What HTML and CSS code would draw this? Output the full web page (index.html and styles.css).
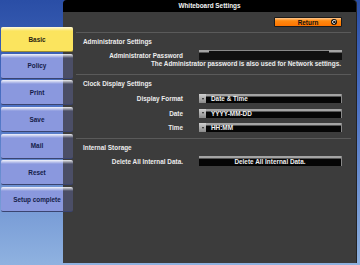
FILE: index.html
```html
<!DOCTYPE html>
<html lang="en">
    <head>
        <meta charset="UTF-8">
        <title>Whiteboard Settings</title>
        <link rel="stylesheet" href="styles.css">
    </head>
    <body>
        <div class="pantalla">
            <nav class="pestanas">
                <button type="button" class="pestana activa">Basic</button>
                <button type="button" class="pestana">Policy</button>
                <button type="button" class="pestana">Print</button>
                <button type="button" class="pestana">Save</button>
                <button type="button" class="pestana">Mail</button>
                <button type="button" class="pestana">Reset</button>
                <button type="button" class="pestana">Setup complete</button>
            </nav>
            <main class="panel">
                <div class="titulo">Whiteboard Settings</div>
                <div class="barra">
                    <button type="button" class="volver">
                        <span>Return</span>
                        <svg class="icono" width="6" height="6" viewBox="0 0 6 6">
                            <circle cx="3" cy="3" r="3" fill="#111"/>
                            <path d="M4.3 2.2A1.5 1.5 0 1 0 4.4 3.6" fill="none" stroke="#fff" stroke-width="0.9"/>
                            <path d="M3.4 1.2L4.9 1.4L4.5 2.8Z" fill="#fff"/>
                        </svg>
                    </button>
                </div>

                <section class="grupo">
                    <h2>Administrator Settings</h2>
                    <div class="fila primera">
                        <label>Administrator Password</label>
                        <div class="campo texto"></div>
                    </div>
                    <p class="nota">The Administrator password is also used for Network settings.</p>
                </section>

                <section class="grupo">
                    <h2>Clock Display Settings</h2>
                    <div class="fila primera">
                        <label>Display Format</label>
                        <div class="campo lista"><span class="flecha"></span><span>Date &amp; Time</span></div>
                    </div>
                    <div class="fila">
                        <label>Date</label>
                        <div class="campo lista"><span class="flecha"></span><span>YYYY-MM-DD</span></div>
                    </div>
                    <div class="fila">
                        <label>Time</label>
                        <div class="campo lista"><span class="flecha"></span><span>HH:MM</span></div>
                    </div>
                </section>

                <section class="grupo ultimo">
                    <h2>Internal Storage</h2>
                    <div class="fila primera">
                        <label>Delete All Internal Data.</label>
                        <button type="button" class="campo boton">Delete All Internal Data.</button>
                    </div>
                </section>
            </main>
        </div>
    </body>
</html>
```

FILE: styles.css
```css
* {
    margin: 0;
    padding: 0;
    box-sizing: border-box;
    font-family: "Liberation Sans", Arial, sans-serif;
}
body {
    width: 360px;
    height: 265px;
    overflow: hidden;
}
.pantalla {
    display: flex;
    height: 265px;
    background: linear-gradient(#2a4ea6, #4d72c4 40%, #8fb2e0);
}
.pestanas {
    width: 63px;
    flex-shrink: 0;
    padding-top: 27px;
    display: flex;
    flex-direction: column;
    gap: 1.7px;
}
.pestana {
    position: relative;
    z-index: 1;
    width: 72px;
    height: 25px;
    margin-left: 1px;
    border: none;
    border-radius: 2px;
    border-bottom: 1px solid #3a4470;
    background:
        linear-gradient(rgba(255,255,255,0.9), rgba(255,255,255,0) 4px),
        linear-gradient(to right, #8a98de 62px, #4b4e66 62px);
    color: #141c48;
    font-size: 6.4px;
    font-weight: bold;
    text-align: center;
    cursor: pointer;
}
.pestana.activa {
    border-bottom-color: #9a8a30;
    background:
        linear-gradient(rgba(255,255,255,0.8), rgba(255,255,255,0) 4px),
        #fbe45e;
    color: #2a2410;
}
.panel {
    width: 294px;
    height: 263px;
    background: #3c3c3c;
    border-right: 1px solid #242424;
    border-radius: 4px 4px 0 0;
}
.titulo {
    height: 12px;
    background: #000;
    border-radius: 4px 4px 0 0;
    color: #f4f4f4;
    font-size: 6.4px;
    font-weight: bold;
    line-height: 12px;
    text-align: center;
}
.barra {
    display: flex;
    justify-content: flex-end;
    padding: 5px 14px 5px 0;
}
.volver {
    width: 68px;
    height: 10px;
    display: flex;
    align-items: center;
    justify-content: center;
    position: relative;
    border: 1px solid #1a1a1a;
    border-radius: 1px;
    background: linear-gradient(#ffc890, #ff8a10 35%, #ff7400);
    color: #101010;
    font-size: 6.4px;
    font-weight: bold;
    cursor: pointer;
}
.icono {
    position: absolute;
    right: 4px;
    top: 1px;
}
.grupo {
    margin: 0 5px 0 13px;
    padding: 3px 9px 6px 7px;
    border-top: 1px solid #5a5a5a;
    color: #ececec;
}
.grupo.ultimo {
    padding-bottom: 0;
}
h2 {
    font-size: 6.4px;
    font-weight: bold;
    line-height: 11px;
}
.fila {
    display: grid;
    grid-template-columns: 1fr 143px;
    column-gap: 16px;
    align-items: center;
    height: 9px;
    margin-top: 5.5px;
}
.fila.primera {
    margin-top: 5px;
}
.grupo:first-of-type .fila, .ultimo .fila {
    height: 10px;
    margin-top: 3px;
}
label {
    font-size: 6.4px;
    font-weight: bold;
    text-align: right;
}
.campo {
    height: 100%;
    display: flex;
    align-items: center;
    background: linear-gradient(#a4a4a4 0 1.5px, #555 1.5px 2.5px, #050505 2.5px);
    border-right: 1px solid #888;
    color: #f0f0f0;
    font-size: 6.4px;
    font-weight: bold;
}
.campo.texto {
    background:
        linear-gradient(to right, #a4a4a4 10px, transparent 10px, transparent 130px, #a4a4a4 130px) top / 100% 2.5px no-repeat,
        linear-gradient(#8a8a8a 0 1px, #101010 1px);
    border-right: none;
}
.flecha {
    width: 7px;
    height: 100%;
    margin-right: 5px;
    background: linear-gradient(#d0d0d0, #8a8a8a);
    display: flex;
    align-items: center;
    justify-content: center;
}
.flecha::after {
    content: "";
    border-left: 1.5px solid transparent;
    border-right: 1.5px solid transparent;
    border-top: 2px solid #222;
}
.campo.boton {
    justify-content: center;
    border: none;
    border-right: 1px solid #888;
    cursor: pointer;
}
.nota {
    margin-right: 1px;
    font-size: 6.4px;
    font-weight: bold;
    line-height: 8px;
    text-align: right;
}
```
